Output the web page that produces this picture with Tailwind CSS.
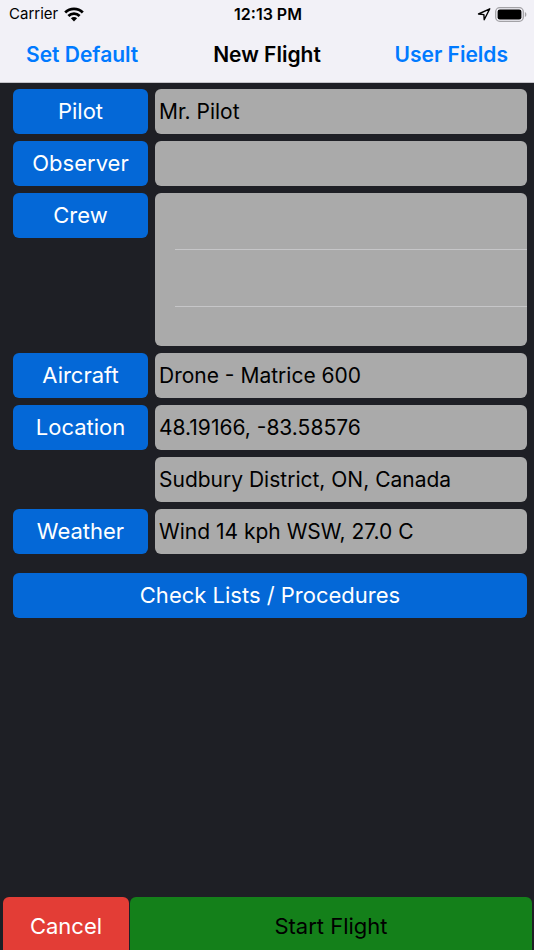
<!DOCTYPE html>
<html lang="en">
  <head>
    <meta charset="UTF-8" />
    <meta name="viewport" content="width=device-width, initial-scale=1" />
    <title>New Flight</title>
    <script src="https://cdn.jsdelivr.net/npm/@tailwindcss/browser@4"></script>
  </head>
  <body class="bg-[#1e1f25] min-h-screen flex flex-col font-['Inter','Liberation_Sans',sans-serif] text-black">
    <header class="bg-[#f2f1f7] border-b border-[#c4c3c9]">
      <!-- Status bar -->
      <div class="grid grid-cols-3 items-center h-7 pl-[9px] pr-[7px] text-[15px]">
        <div class="flex items-center gap-[6px]">
          <span>Carrier</span>
          <svg class="w-5 h-[15px]" viewBox="0 0 20 15" fill="none" stroke="black" stroke-width="2.8">
            <path d="M1.2 5.4a12.6 12.6 0 0 1 17.600 0" />
            <path d="M4.4 9a8 8 0 0 1 11.2 0" />
            <path d="M10 14.4 6.900 11.3a4.4 4.4 0 0 1 6.2 0z" fill="black" stroke="none" />
          </svg>
        </div>
        <div class="text-center text-[16px] font-semibold">12:13 PM</div>
        <div class="flex items-center justify-end gap-1">
          <svg class="w-[14px] h-[14px]" viewBox="0 0 14 14" fill="none" stroke="black" stroke-width="1.4" stroke-linejoin="round">
            <path d="M12.800 1.800 1.500 7l5.400.6.3 5.200z" />
          </svg>
          <svg class="w-[32px] h-[15px]" viewBox="0 0 32 15">
            <rect x=".7" y=".7" width="27.600" height="13.600" rx="4" fill="none" stroke="#a3a2a6" stroke-width="1.3" />
            <rect x="2.600" y="2.600" width="23.800" height="9.800" rx="2.200" fill="black" />
            <path d="M29.900 5v5c2-.7 2-4.300 0-5z" fill="#a3a2a6" />
          </svg>
        </div>
      </div>

      <!-- Navigation bar -->
      <nav class="grid grid-cols-3 items-center h-[54px] px-[26px] text-[21px] font-semibold whitespace-nowrap">
        <button type="button" class="text-left text-[#007aff]">Set Default</button>
        <h1 class="text-center">New Flight</h1>
        <button type="button" class="text-right text-[#007aff]">User Fields</button>
      </nav>
    </header>

    <main class="flex-1 pt-[6px] pl-[13px] pr-[7px]">
      <form class="grid grid-cols-[135px_1fr] gap-x-[7px] gap-y-[7px] items-start text-[22px]">
        <button type="button" id="pilotBtn" class="h-[45px] rounded-md bg-[#0468d7] text-white">Pilot</button>
        <input type="text" aria-labelledby="pilotBtn" value="Mr. Pilot" class="w-full h-[45px] rounded-md bg-[#aaaaaa] px-1 text-[21px]" />

        <button type="button" id="observerBtn" class="h-[45px] rounded-md bg-[#0468d7] text-white">Observer</button>
        <input type="text" aria-labelledby="observerBtn" value="" class="w-full h-[45px] rounded-md bg-[#aaaaaa] px-1 text-[21px]" />

        <button type="button" id="crewBtn" class="h-[45px] rounded-md bg-[#0468d7] text-white">Crew</button>
        <ul aria-labelledby="crewBtn" class="h-[153px] rounded-md bg-[#aaaaaa] pl-5 overflow-hidden">
          <li class="h-[57px] border-b border-[#c6c6c8]"></li>
          <li class="h-[57px] border-b border-[#c6c6c8]"></li>
          <li></li>
        </ul>

        <button type="button" id="aircraftBtn" class="h-[45px] rounded-md bg-[#0468d7] text-white">Aircraft</button>
        <input type="text" aria-labelledby="aircraftBtn" value="Drone - Matrice 600" class="w-full h-[45px] rounded-md bg-[#aaaaaa] px-1 text-[21px]" />

        <button type="button" id="locationBtn" class="h-[45px] rounded-md bg-[#0468d7] text-white">Location</button>
        <input type="text" aria-labelledby="locationBtn" value="48.19166, -83.58576" class="w-full h-[45px] rounded-md bg-[#aaaaaa] px-1 text-[21px]" />

        <input type="text" aria-label="Place" value="Sudbury District, ON, Canada" class="col-start-2 w-full h-[45px] rounded-md bg-[#aaaaaa] px-1 text-[21px]" />

        <button type="button" id="weatherBtn" class="h-[45px] rounded-md bg-[#0468d7] text-white">Weather</button>
        <input type="text" aria-labelledby="weatherBtn" value="Wind 14 kph WSW, 27.0 C" class="w-full h-[45px] rounded-md bg-[#aaaaaa] px-1 text-[21px]" />
      </form>

      <button type="button" class="mt-[19px] w-full h-[45px] rounded-md bg-[#0468d7] text-white text-[22px]">
        Check Lists / Procedures
      </button>
    </main>

    <footer class="flex gap-px pl-[3px] pr-[2px] text-[22px]">
      <button type="button" class="w-[126px] h-[53px] pt-[6px] rounded-t-md bg-[#e33d36] text-white">Cancel</button>
      <button type="button" class="flex-1 h-[53px] pt-[6px] rounded-t-md bg-[#14801a]">Start Flight</button>
    </footer>
  </body>
</html>
